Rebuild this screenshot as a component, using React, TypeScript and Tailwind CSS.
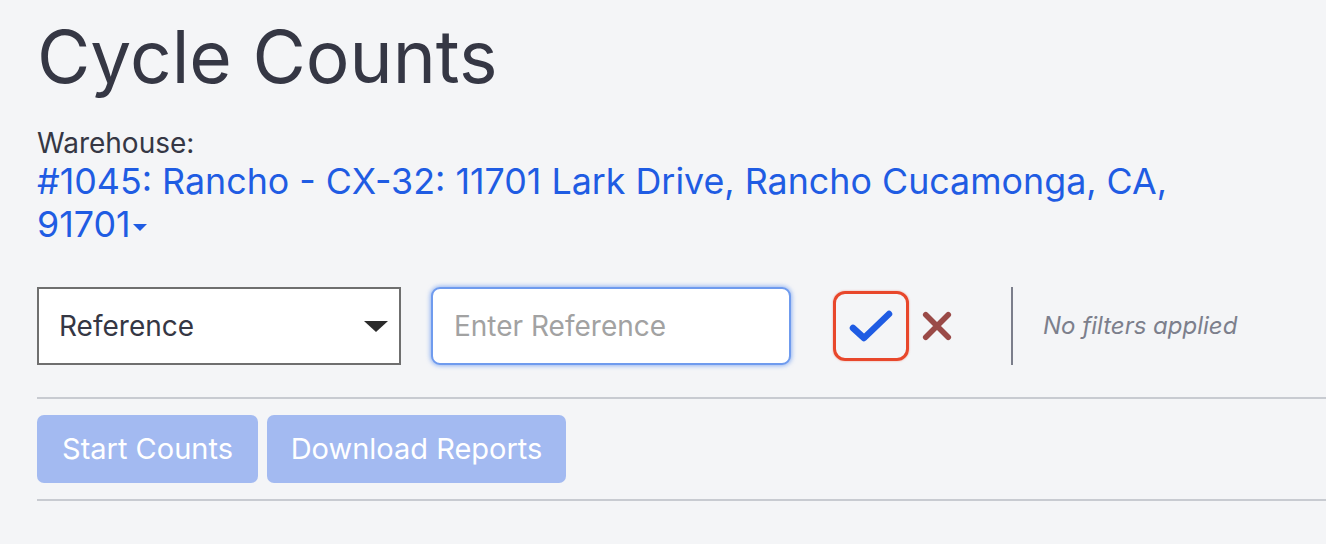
import { useState } from 'react';

function CheckIcon() {
  return (
    <svg viewBox="0 0 44 32" className="h-[32px] w-[44px]" fill="none">
      <path
        d="M4 18 L15 28 L40 4"
        stroke="#1f5ce3"
        strokeWidth="6.5"
        strokeLinecap="round"
        strokeLinejoin="round"
      />
    </svg>
  );
}

function CrossIcon() {
  return (
    <svg viewBox="0 0 32 32" className="h-[30px] w-[30px]" fill="none">
      <path
        d="M4 4 L28 28 M28 4 L4 28"
        stroke="#9a4a47"
        strokeWidth="6"
        strokeLinecap="round"
      />
    </svg>
  );
}

export default function App() {
  const [reference, setReference] = useState('');

  return (
    <div className="min-h-[544px] overflow-hidden bg-[#f4f5f7] pl-[37px] font-['Inter',sans-serif] text-[#353744]">
      <h1 className="pt-[14px] text-[73px] leading-[86px] font-normal">Cycle Counts</h1>

      <div className="mt-[26px] text-[28px] leading-[34px]">Warehouse:</div>
      <button className="block w-[1180px] text-left text-[35.8px] leading-[43px] text-[#1f5ce3]">
        #1045: Rancho - CX-32: 11701 Lark Drive, Rancho Cucamonga, CA,{' '}
        <span className="whitespace-nowrap">
          91701
          <span className="ml-[2px] inline-block h-0 w-0 border-x-[7px] border-t-[7px] border-x-transparent border-t-[#1f5ce3] align-middle" />
        </span>
      </button>

      <div className="mt-[41px] flex items-center">
        <div className="flex h-[78px] w-[364px] items-center justify-between border-2 border-[#6f6f6f] bg-white pr-[11px] pl-[20px]">
          <span className="text-[28px]">Reference</span>
          <span className="h-0 w-0 border-x-[12px] border-t-[11px] border-x-transparent border-t-[#2b2b2b]" />
        </div>

        <input
          value={reference}
          onChange={(e) => setReference(e.target.value)}
          placeholder="Enter Reference"
          className="ml-[30px] h-[78px] w-[360px] rounded-[9px] border-2 border-[#6f9bee] bg-white px-[21px] text-[28px] shadow-[0_0_4px_1px_rgba(86,140,240,0.6)] outline-none placeholder:text-[#a2a2a2]"
        />

        <button className="ml-[42px] flex h-[70px] w-[76px] items-center justify-center rounded-[12px] border-[3px] border-[#e8472b] shadow-[0_0_2px_rgba(232,71,43,0.5)]">
          <CheckIcon />
        </button>
        <button className="ml-[13px] flex items-center justify-center">
          <CrossIcon />
        </button>

        <div className="ml-[59px] h-[78px] w-[2px] bg-[#7b7e8b]" />
        <span className="ml-[30px] text-[24px] text-[#7c7f8c] italic">No filters applied</span>
      </div>

      <div className="mt-[32px] h-[2px] bg-[#c8cbd1]" />

      <div className="mt-[16px] flex gap-[9px]">
        <button className="h-[68px] w-[221px] rounded-[7px] bg-[#a3baf1] text-[29px] text-white">
          Start Counts
        </button>
        <button className="h-[68px] w-[299px] rounded-[7px] bg-[#a3baf1] text-[29px] text-white">
          Download Reports
        </button>
      </div>

      <div className="mt-[16px] h-[2px] bg-[#c8cbd1]" />
    </div>
  );
}
